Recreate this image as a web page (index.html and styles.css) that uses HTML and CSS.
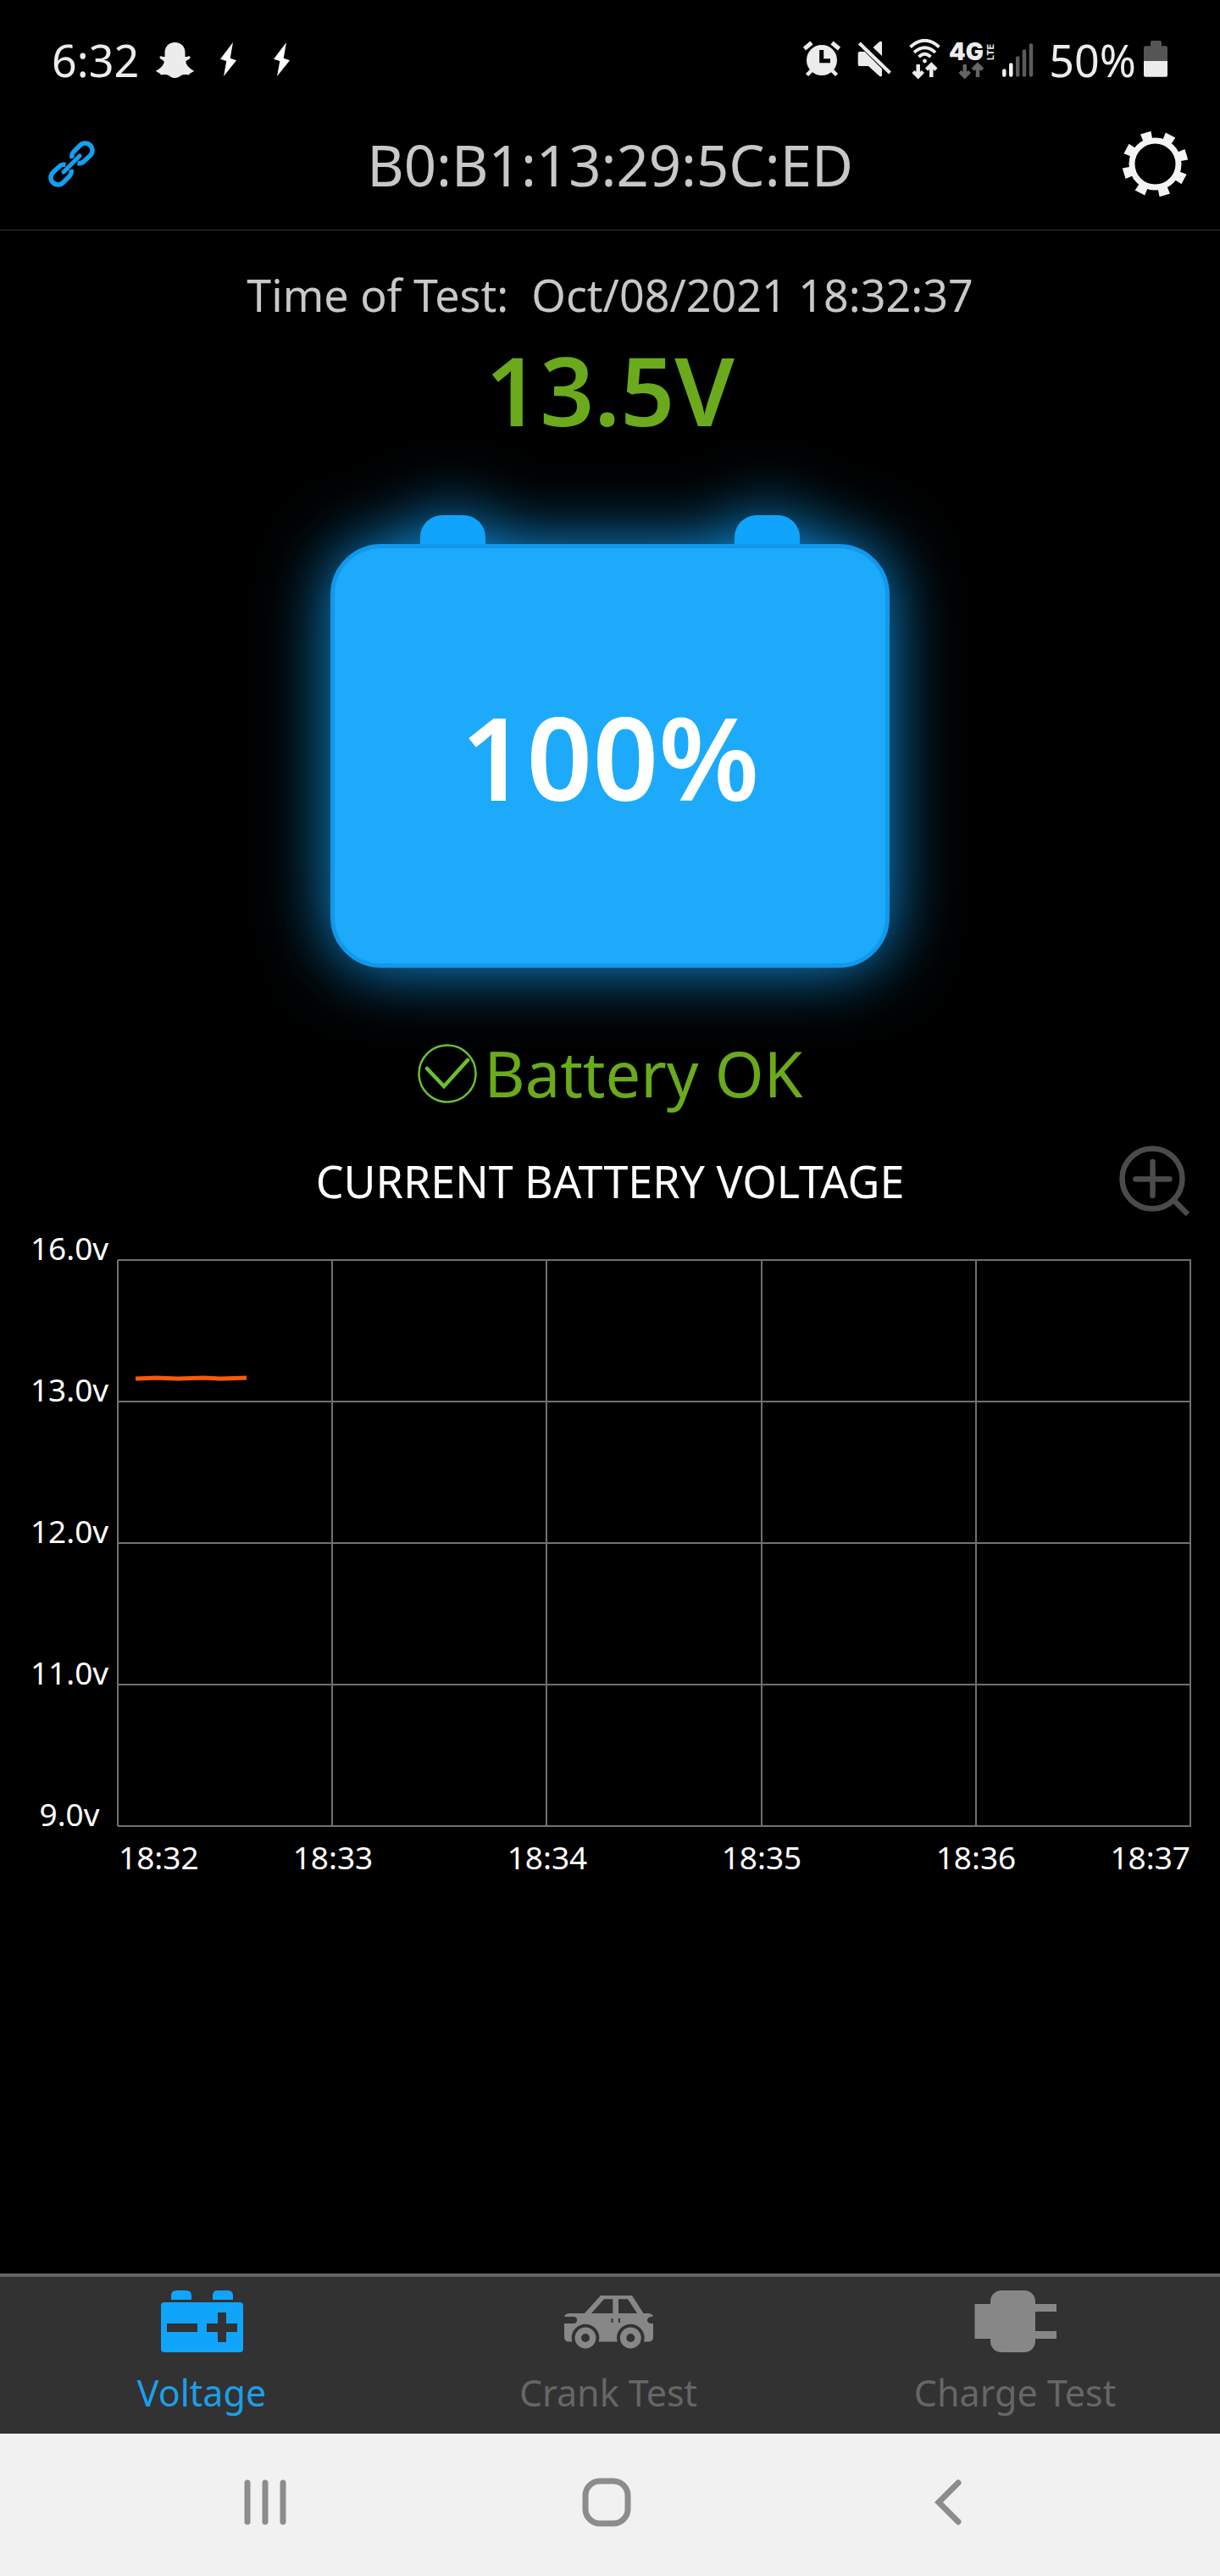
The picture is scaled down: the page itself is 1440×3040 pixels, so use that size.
FILE: index.html
```html
<!DOCTYPE html>
<html lang="en">
<head>
  <meta charset="UTF-8">
  <meta name="viewport" content="width=device-width, initial-scale=1">
  <title>Battery Monitor</title>
  <link rel="stylesheet" href="styles.css">
</head>
<body>
  <!-- Phone status bar -->
  <div class="status-bar">
    <div class="status-left">
      <span class="clock">6:32</span>
      <svg class="ghost" width="45" height="48" viewBox="0 0 45 48" fill="#ececec">
        <path d="M22.5 4C30 4 34.5 9 34.5 16V21C37 21.5 39 19 40.5 21C41.5 23 38 24.5 35.5 26C34.5 29 39 35 45 37.5C44 39.5 40 39.5 39 42.5C34 41.5 31 42 28.5 44C24 46.8 20.5 46.8 16.5 44C14 42 11 41.5 6 42.5C5 39.5 1 39.5 0 37.5C6 35 10.5 29 9.5 26C7 24.5 4 23 4.5 21C6 19 8 21.5 10.5 21V16C10.5 9 15 4 22.5 4Z"/>
      </svg>
      <svg class="bolt" width="19" height="48" viewBox="0 0 19 48" fill="#fff">
        <path d="M15 4L0 23.7L7.3 26L4 44L19 25.3L11.7 22.7Z"/>
      </svg>
      <svg class="bolt" width="19" height="48" viewBox="0 0 19 48" fill="#fff">
        <path d="M15 4L0 23.7L7.3 26L4 44L19 25.3L11.7 22.7Z"/>
      </svg>
    </div>
    <div class="status-right">
      <svg class="alarm" width="44" height="48" viewBox="0 0 44 48">
        <circle cx="22" cy="25" r="18" fill="#ececec"/>
        <path d="M1.5 11.5L10 4.5M34 4.5L42.5 11.5" stroke="#ececec" stroke-width="5"/>
        <path d="M4.5 42.5L10 37M39.5 42.5L34 37" stroke="#ececec" stroke-width="4.5"/>
        <path d="M21.7 13V25.7H32" fill="none" stroke="#000" stroke-width="5"/>
      </svg>
      <svg class="mute" width="40" height="48" viewBox="0 0 40 48" fill="#ececec">
        <path d="M2.5 15H8.7L29 35.3V43.5Q28 45 26 43.8L13 32H2.5Q0.7 32 0.7 30V17Q0.7 15 2.5 15Z"/>
        <path d="M18.5 10L26 3.3Q28 2 29 3.5V20Z"/>
        <path d="M2.3 5L38.5 40" stroke="#ececec" stroke-width="4"/>
      </svg>
      <svg class="wifi" width="37" height="48" viewBox="0 0 37 48" fill="none" stroke="#ececec">
        <g stroke-width="3.8">
          <path d="M1.5 9.5Q18.5 -6 35.5 9.5"/>
          <path d="M6 15.8Q18.5 4.5 31 15.8"/>
          <path d="M11.5 21.2Q18.5 14.5 25.5 21.2"/>
        </g>
        <circle cx="18.5" cy="26" r="2.4" fill="#ececec" stroke="none"/>
        <g stroke-width="4.5">
          <path d="M10.7 30V44M5 38.5L10.7 44.2L16.4 38.5"/>
          <path d="M26.3 45V31M20.6 36.2L26.3 30.5L32 36.2"/>
        </g>
      </svg>
      <svg class="network" width="56" height="48" viewBox="0 0 56 48">
        <text class="network-gen" x="0" y="25">4G</text>
        <text class="network-lte" transform="translate(53 25) rotate(-90)">LTE</text>
        <g fill="none" stroke="#666" stroke-width="4.5">
          <path d="M18.7 30V44M13 38.5L18.7 44.2L24.4 38.5"/>
          <path d="M34 45V31M28.3 36.2L34 30.5L39.7 36.2"/>
        </g>
      </svg>
      <svg class="signal" width="37" height="48" viewBox="0 0 37 48" stroke-width="4.5" stroke-linecap="round">
        <path d="M2.3 37.5V42.5M10.3 30.5V42.5" stroke="#f4f4f4"/>
        <path d="M18.2 22.5V42.5M26 14.5V42.5M34 7.5V42.5" stroke="#5c5c5c"/>
      </svg>
      <span class="battery-percent">50%</span>
      <svg class="battery-small" width="28" height="48" viewBox="0 0 28 48">
        <path d="M0 26V10Q0 8.3 2 8.3H8V4Q8 2 10 2H19Q21 2 21 4V8.3H26Q28 8.3 28 10V26Z" fill="#555"/>
        <path d="M0 26H28V42.5Q28 44.7 26 44.7H2Q0 44.7 0 42.5Z" fill="#ececec"/>
      </svg>
    </div>
  </div>

  <header class="header">
    <button class="icon-button link-button" aria-label="Connection">
      <svg width="55" height="55" viewBox="0 0 55 55" fill="none" stroke="#149ff0" stroke-width="5.5">
        <path d="M28 21C27 16 29 14 31 12L37.5 5.5A8.3 8.3 0 0 1 49.5 17.5L42 24.5C40 26.5 38 27 34.5 26.5"/>
        <path d="M28 21C27 16 29 14 31 12L37.5 5.5A8.3 8.3 0 0 1 49.5 17.5L42 24.5C40 26.5 38 27 34.5 26.5" transform="rotate(180 27.5 27.5)"/>
        <path d="M18 37L37 18" stroke-width="5" stroke-linecap="round"/>
      </svg>
    </button>
    <h1 class="device">B0:B1:13:29:5C:ED</h1>
    <button class="icon-button gear-button" aria-label="Settings">
      <svg width="77" height="77" viewBox="-38.5 -38.5 77 77" fill="#f4f4f4">
        <circle r="27.5" fill="none" stroke="#f4f4f4" stroke-width="7"/>
        <g transform="rotate(-17)">
          <path d="M-5.5 -29L-6.5 -38.5H6.5L5.5 -29Z"/>
          <path d="M-5.5 -29L-6.5 -38.5H6.5L5.5 -29Z" transform="rotate(45)"/>
          <path d="M-5.5 -29L-6.5 -38.5H6.5L5.5 -29Z" transform="rotate(90)"/>
          <path d="M-5.5 -29L-6.5 -38.5H6.5L5.5 -29Z" transform="rotate(135)"/>
          <path d="M-5.5 -29L-6.5 -38.5H6.5L5.5 -29Z" transform="rotate(180)"/>
          <path d="M-5.5 -29L-6.5 -38.5H6.5L5.5 -29Z" transform="rotate(225)"/>
          <path d="M-5.5 -29L-6.5 -38.5H6.5L5.5 -29Z" transform="rotate(270)"/>
          <path d="M-5.5 -29L-6.5 -38.5H6.5L5.5 -29Z" transform="rotate(315)"/>
        </g>
      </svg>
    </button>
  </header>

  <main class="content">
    <p class="test-time">Time of Test:&nbsp; Oct/08/2021 18:32:37</p>
    <p class="voltage">13.5V</p>

    <!-- Big battery -->
    <div class="battery">
      <div class="terminals">
        <span class="terminal"></span>
        <span class="terminal"></span>
      </div>
      <div class="battery-body">100%</div>
    </div>

    <div class="result">
      <svg width="70" height="70" viewBox="0 0 70 70" fill="none" stroke="#6cbf32">
        <circle cx="35" cy="35" r="33.5" stroke-width="2.5"/>
        <path d="M11 29L31 50L59 19" stroke-width="4.5" stroke-linecap="round"/>
      </svg>
      <span>Battery OK</span>
    </div>

    <div class="chart-header">
      <h2 class="chart-title">CURRENT BATTERY VOLTAGE</h2>
      <button class="icon-button zoom-button" aria-label="Zoom in">
        <svg width="84" height="84" viewBox="0 0 84 84" fill="none" stroke="#4b4b4b" stroke-width="6.5">
          <circle cx="39" cy="39" r="35.5"/>
          <path d="M39.5 19V59M19.5 39.5H59.5" stroke-linecap="round"/>
          <path d="M64 64L81 81"/>
        </svg>
      </button>
    </div>

    <svg class="chart" viewBox="0 0 1440 800">
      <path class="grid-line" d="M139 51H1406M139 218H1406M139 385H1406M139 552H1406M139 719H1406"/>
      <path class="grid-line" d="M139 51V719M392 51V719M645 51V719M899 51V719M1152 51V719M1405 51V719"/>
      <path class="reading" d="M160 191L185 190L210 191L240 190L260 191L291 190"/>
      <g class="labels">
        <text x="82" y="51">16.0v</text>
        <text x="82" y="218">13.0v</text>
        <text x="82" y="385">12.0v</text>
        <text x="82" y="552">11.0v</text>
        <text x="82" y="719">9.0v</text>
        <text class="label-first" x="140" y="770">18:32</text>
        <text x="393" y="770">18:33</text>
        <text x="646" y="770">18:34</text>
        <text x="899" y="770">18:35</text>
        <text x="1152" y="770">18:36</text>
        <text class="label-last" x="1405" y="770">18:37</text>
      </g>
    </svg>
  </main>

  <nav class="tabs">
    <a class="tab active" href="#voltage">
      <svg width="97" height="73" viewBox="0 0 97 73" fill="#10a4fa">
        <path d="M12 11V6Q12 0 18 0H30Q36 0 36 6V11ZM61 11V6Q61 0 67 0H79Q85 0 85 6V11Z"/>
        <rect y="14" width="97" height="59" rx="4"/>
        <path d="M7 39H43V49H7ZM54 39H67V26H77V39H90V49H77V61H67V49H54Z" fill="#323232"/>
      </svg>
      <span>Voltage</span>
    </a>
    <a class="tab" href="#crank">
      <svg width="105" height="73" viewBox="0 0 105 73" fill="#878787">
        <path d="M24 27L43 6H80L93.5 27H98Q105 27 105 32V55Q105 60.5 99 60.5H6Q0 60.5 0 55V32Q0 27 7 27Z"/>
        <g fill="#323232">
          <path d="M32 27L47 10.3H57.3V27ZM64 10.3H75L86 27H64Z"/>
          <path d="M0 31H11Q15 31 15 35Q15 39 11 39H0ZM105 31H102Q98 32 98 35Q98 38 102 39H105Z"/>
          <path d="M55.5 33H57.5V38H55.5ZM64 33H66V38H64Z"/>
          <circle cx="25" cy="56" r="16.3"/>
          <circle cx="78.3" cy="56" r="16.3"/>
        </g>
        <circle cx="25" cy="56" r="8.7" fill="none" stroke="#878787" stroke-width="7.5"/>
        <circle cx="78.3" cy="56" r="8.7" fill="none" stroke="#878787" stroke-width="7.5"/>
      </svg>
      <span>Crank Test</span>
    </a>
    <a class="tab" href="#charge">
      <svg width="97" height="73" viewBox="0 0 97 73" fill="#878787">
        <path d="M0.5 16H25V57H0.5ZM70 16H97V25H70ZM70 48H97V57H70Z"/>
        <rect x="19" width="53" height="73" rx="13"/>
      </svg>
      <span>Charge Test</span>
    </a>
  </nav>

  <!-- Android navigation -->
  <div class="system-nav">
    <button class="icon-button" aria-label="Recent apps">
      <svg width="50" height="58" viewBox="0 0 50 58" stroke="#8c8c8c" stroke-width="7" stroke-linecap="round">
        <path d="M4 6V52M25 6V52M46 6V52"/>
      </svg>
    </button>
    <button class="icon-button" aria-label="Home">
      <svg width="58" height="58" viewBox="0 0 58 58" fill="none" stroke="#8c8c8c" stroke-width="7">
        <rect x="4" y="4" width="50" height="50" rx="17"/>
      </svg>
    </button>
    <button class="icon-button" aria-label="Back">
      <svg width="32" height="58" viewBox="0 0 32 58" fill="none" stroke="#8c8c8c" stroke-width="7" stroke-linecap="round">
        <path d="M28 6L5 29L28 52"/>
      </svg>
    </button>
  </div>
</body>
</html>
```

FILE: styles.css
```css
* {
  box-sizing: border-box;
}
body {
  margin: 0;
  min-height: 100vh;
  display: flex;
  flex-direction: column;
  background: #000;
  color: #fff;
  font-family: "Noto Sans", "Open Sans", sans-serif;
}
svg {
  display: block;
  flex: none;
}
h1, h2, p {
  margin: 0;
  font-weight: 400;
}
.icon-button {
  display: flex;
  align-items: center;
  justify-content: center;
  padding: 0;
  border: none;
  background: none;
  cursor: pointer;
}

/* Status bar */
.status-bar {
  display: flex;
  justify-content: space-between;
  height: 118px;
  padding: 22px 62px 0 61px;
  color: #ececec;
  font-size: 52px;
}
.status-left,
.status-right {
  display: flex;
  align-items: center;
}
.ghost {
  margin-left: 20px;
}
.bolt {
  margin-left: 31px;
}
.bolt + .bolt {
  margin-left: 44px;
}
.mute {
  margin-left: 20px;
}
.wifi {
  margin-left: 21px;
}
.network {
  margin-left: 10px;
  overflow: visible;
}
.signal {
  margin-left: 7px;
}
.battery-percent {
  margin-left: 18px;
}
.battery-small {
  margin-left: 9px;
}
.network text {
  font-family: Inter, sans-serif;
  fill: #ececec;
}
.network-gen {
  font-size: 28px;
  font-weight: 900;
}
.network-lte {
  font-size: 11px;
  font-weight: 700;
}

/* Header */
.header {
  display: grid;
  grid-template-columns: 1fr auto 1fr;
  align-items: center;
  height: 154px;
  padding: 0 38px 2px 57px;
  border-bottom: 1px solid #333;
}
.gear-button {
  justify-self: end;
}
.link-button {
  justify-self: start;
}
.device {
  padding-right: 19px;
  color: #c8c8c8;
  font-size: 67px;
  line-height: 80px;
}

/* Content */
.content {
  flex: 1;
  display: flex;
  flex-direction: column;
  align-items: center;
  padding-top: 44px;
}
.test-time {
  color: #c8c8c8;
  font-size: 52px;
  line-height: 64px;
}
.voltage {
  margin-top: 16px;
  color: #6aaa1c;
  font-size: 112px;
  font-weight: 600;
  line-height: 128px;
}
.battery {
  width: 660px;
  max-width: 90%;
  margin-top: 84px;
  filter: drop-shadow(0 0 40px #0f97e8);
}
.terminals {
  display: flex;
  justify-content: space-between;
  padding: 0 106px;
}
.terminal {
  width: 77px;
  height: 34px;
  border-radius: 26px 26px 0 0;
  background: #10a4fd;
}
.battery-body {
  display: flex;
  align-items: center;
  justify-content: center;
  height: 500px;
  border: 5px solid #1198ec;
  border-radius: 60px;
  background: #1daafa;
  font-size: 136px;
  font-weight: 600;
}
.result {
  display: flex;
  align-items: center;
  gap: 9px;
  margin-top: 85px;
  color: #6aaa1c;
  font-size: 74px;
  line-height: 80px;
}

/* Chart */
.chart-header {
  display: grid;
  grid-template-columns: 1fr auto 1fr;
  align-items: center;
  width: 100%;
  margin-top: 45px;
  padding: 0 35px;
}
.chart-title {
  grid-column: 2;
  font-size: 52px;
  line-height: 64px;
}
.zoom-button {
  justify-self: end;
}
.chart {
  width: 100%;
}
.grid-line {
  fill: none;
  stroke: #707070;
  stroke-width: 2;
}
.reading {
  fill: none;
  stroke: #fa5a0a;
  stroke-width: 5;
}
.labels {
  fill: #fff;
  font-size: 37px;
  text-anchor: middle;
}
.label-first {
  text-anchor: start;
}
.label-last {
  text-anchor: end;
}

/* Bottom tabs */
.tabs {
  display: grid;
  grid-template-columns: repeat(3, 1fr);
  height: 189px;
  border-top: 4px solid #666;
  background: #323232;
}
.tab {
  display: flex;
  flex-direction: column;
  align-items: center;
  gap: 20px;
  padding: 16px 4px 0 0;
  color: #666;
  font-size: 43px;
  line-height: 56px;
  text-decoration: none;
}
.tab.active {
  color: #1c9fea;
}

/* System navigation */
.system-nav {
  display: grid;
  grid-template-columns: repeat(3, 1fr);
  height: 168px;
  padding: 0 120px 6px 112px;
  background: #f1f1f1;
}
```
